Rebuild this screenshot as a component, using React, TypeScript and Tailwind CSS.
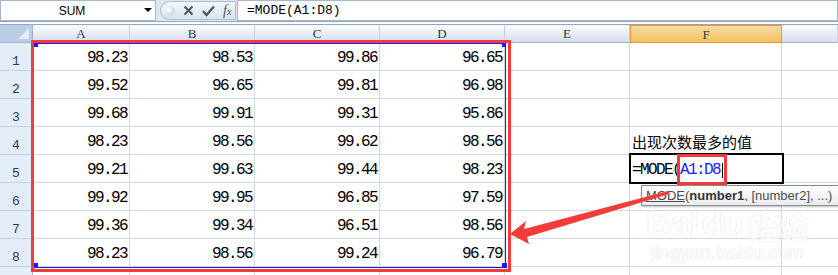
import React from 'react'

const rows = [
  ['98.23', '98.53', '99.86', '96.65'],
  ['99.52', '96.65', '99.81', '96.98'],
  ['99.68', '99.91', '99.31', '95.86'],
  ['98.23', '98.56', '99.62', '98.56'],
  ['99.21', '99.63', '99.44', '98.23'],
  ['99.92', '99.95', '96.85', '97.59'],
  ['99.36', '99.34', '96.51', '98.56'],
  ['98.23', '98.56', '99.24', '96.79'],
  ['', '', '', ''],
]

const cols = ['A', 'B', 'C', 'D', 'E', 'F', '']

function ColHeader({ label, active }: { label: string; active?: boolean }) {
  if (active) {
    return (
      <div className="flex items-center justify-center border border-[#f29436] bg-[linear-gradient(#f9dca3,#f1c15f)] pt-[1px] text-[13px] text-[#243c3c] [font-family:'Liberation_Serif',serif]">
        {label}
      </div>
    )
  }
  return (
    <div className="flex items-center justify-center border-r border-b border-r-[#c5d1e0] border-b-[#9eb6ce] bg-[linear-gradient(#f9fbfd,#e4eaf3_60%,#d5dfec)] pt-[1px] text-[13px] text-[#243c3c] [font-family:'Liberation_Serif',serif]">
      {label}
    </div>
  )
}

export default function App() {
  return (
    <div className="relative w-[838px] h-[275px] overflow-hidden bg-white [font-family:'Liberation_Sans',sans-serif]">
      {/* formula bar */}
      <div className="flex h-[21px] bg-[#dfe6ef]">
        <div className="relative flex w-[156px] items-center justify-center border border-[#a5b8d0] bg-white text-[12px] text-black">
          <span className="-ml-[12px]">SUM</span>
          <span className="absolute right-[3px] top-[7px] h-0 w-0 border-x-[4px] border-t-[4px] border-x-transparent border-t-black" />
        </div>
        <div className="ml-[4px] mt-[1px] flex h-[19px] w-[76px] items-center gap-[8px] rounded-l-full border border-[#a9bbd1] bg-[linear-gradient(#f4f7fb,#d9e2ee)] pl-[4px]">
          <span className="h-[10px] w-[10px] rounded-full bg-[radial-gradient(circle_at_35%_35%,#ffffff,#b9c3cf)]" />
          <svg width="11" height="11" viewBox="0 0 11 11">
            <path d="M1.5 1.5 L9.5 9.5 M9.5 1.5 L1.5 9.5" stroke="#4d5560" strokeWidth="2" />
          </svg>
          <svg width="13" height="12" viewBox="0 0 13 12">
            <path d="M1 6 L4.5 10 L12 1.5" stroke="#4d5560" strokeWidth="2.4" fill="none" />
          </svg>
          <span className="text-[14px] italic text-[#4d5560] [font-family:'Liberation_Serif',serif] leading-none">
            f<span className="text-[10px]">x</span>
          </span>
        </div>
        <div className="ml-[1px] flex flex-1 items-center border border-[#a5b8d0] bg-white pl-[9px] text-[13px] text-black [font-family:'Liberation_Mono',monospace]">
          =MODE(A1:D8)
        </div>
      </div>
      <div className="h-[4px] border-y border-[#8fa6c2] bg-white" />

      {/* sheet */}
      <div className="grid grid-cols-[33px_97px_125px_125px_125px_125px_152px_1fr] grid-rows-[18px_repeat(9,28px)]">
        <div className="relative border-r border-b border-[#9eb6ce] bg-[#b9cde5]">
          <svg className="absolute bottom-[3px] right-[3px]" width="11" height="11" viewBox="0 0 11 11">
            <polygon points="11,0 11,11 0,11" fill="#e2eaf4" />
          </svg>
        </div>
        {cols.map((c, i) => (
          <ColHeader key={i} label={c} active={c === 'F'} />
        ))}

        {rows.map((r, ri) => (
          <React.Fragment key={ri}>
            <div className="flex items-end justify-center border-r border-b border-r-[#9eb6ce] border-b-[#c5d1e0] bg-[#e4ecf7] pb-[2px] text-[13px] text-[#2a3f4a] leading-none [font-family:'Liberation_Mono',monospace]">
              {ri + 1}
            </div>
            {r.map((v, ci) => (
              <div
                key={ci}
                className="flex items-end justify-end border-r border-b border-[#d0d7e5] pb-[4px] pr-[2px] text-[16px] leading-none tracking-[-1.6px] text-black [font-family:'Liberation_Mono',monospace]"
              >
                {v}
              </div>
            ))}
            <div className="border-r border-b border-[#d0d7e5]" />
            <div className="flex items-end border-r border-b border-[#d0d7e5] pb-[5px] pl-[2px] text-[15px] leading-none text-black [font-family:'Noto_Sans_CJK_SC',sans-serif]">
              {ri === 3 ? '出现次数最多的值' : ''}
            </div>
            <div className="border-b border-[#d0d7e5]" />
          </React.Fragment>
        ))}
      </div>

      {/* selection of A1:D8 */}
      <div className="absolute left-[33px] top-[43px] h-[225px] w-[473px] border border-[#1a1aff]" />
      <span className="absolute left-[34px] top-[43px] h-[4px] w-[4px] bg-[#1a1aff]" />
      <span className="absolute left-[502px] top-[43px] h-[4px] w-[4px] bg-[#1a1aff]" />
      <span className="absolute left-[34px] top-[263px] h-[4px] w-[4px] bg-[#1a1aff]" />
      <span className="absolute left-[502px] top-[263px] h-[5px] w-[5px] bg-[#1a1aff]" />

      {/* red marker around the data */}
      <div className="absolute left-[31px] top-[40px] h-[232px] w-[480px] border-[3px] border-[#f43b3b]" />

      {/* cell in edit mode */}
      <div className="absolute left-[629px] top-[153px] flex h-[31px] w-[155px] items-end border-2 border-black bg-white pb-[4px] pl-[1px] text-[16px] leading-none tracking-[-1.6px] text-black [font-family:'Liberation_Mono',monospace]">
        <span>=MODE(</span>
        <span className="text-[#1a1aff]">A1:D8</span>
        <span className="ml-[2px] h-[15px] w-[1px] bg-black" />
      </div>
      <div className="absolute left-[677px] top-[154px] h-[31px] w-[50px] border-[3px] border-[#f43b3b]" />

      {/* tooltip */}
      <div className="absolute left-[641px] top-[185px] flex h-[21px] w-[210px] items-center border border-[#8a8a8a] bg-[linear-gradient(#ffffff,#e9ecf1)] pl-[4px] text-[13px] text-[#4c4c4c] shadow-[1px_1px_2px_rgba(0,0,0,0.25)]">
        <span className="underline">MODE</span>(<b className="text-[#333]">number1</b>, [number2], ...)
      </div>

      {/* watermark */}
      <div className="pointer-events-none absolute left-[646px] top-[206px] flex flex-col items-center text-white opacity-60 [text-shadow:0_0_1px_#c8c8c8,0_0_1px_#c8c8c8]">
        <div className="flex items-end text-[34px] font-bold leading-none">
          Bai<span className="ml-[3px]">du</span>
          <span className="ml-[5px] text-[30px] [font-family:'Noto_Sans_CJK_SC',sans-serif]">经验</span>
        </div>
        <div className="mt-[3px] text-[19px] leading-none">jingyan.baidu.com</div>
      </div>

      {/* red arrow */}
      <svg className="absolute left-0 top-0" width="838" height="275" viewBox="0 0 838 275">
        <polygon
          points="510,234 526,221 524,229 668,191 669,194 527,237 529,244"
          fill="#f43b3b"
        />
      </svg>
    </div>
  )
}
